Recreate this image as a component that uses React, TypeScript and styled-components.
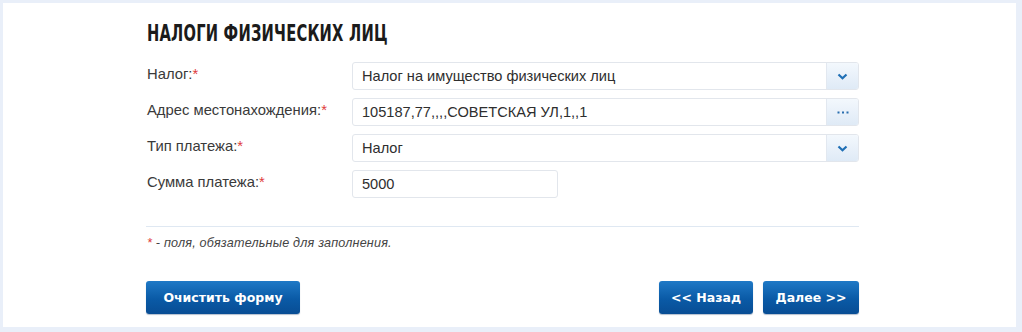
import React from "react";
import styled, { createGlobalStyle } from "styled-components";

const Global = createGlobalStyle`
  html, body { margin: 0; padding: 0; }
  body { background: #e9eff9; font-family: Arial, "Liberation Sans", sans-serif; }
`;

const Frame = styled.div`
  width: 1022px;
  height: 332px;
  box-sizing: border-box;
  padding: 3px 6px 5px 3px;
  background: #e9eff9;
`;

const Panel = styled.div`
  height: 100%;
  box-sizing: border-box;
  background: #fff;
  padding: 16px 0 0 143px;
`;

const Content = styled.div`
  width: 713px;
`;

const Title = styled.h1`
  margin: 0 0 15px 1px;
  font-family: "DejaVu Sans Condensed", "DejaVu Sans", sans-serif;
  font-weight: bold;
  font-size: 23px;
  line-height: 28px;
  color: #1b1b1b;
  letter-spacing: 0.3px;
  transform: scaleX(0.71);
  transform-origin: left center;
  white-space: nowrap;
`;

const Form = styled.div`
  display: flex;
  flex-direction: column;
  gap: 8px;
`;

const Row = styled.div`
  display: grid;
  grid-template-columns: 206px 1fr;
  align-items: center;
  height: 28px;
`;

const Label = styled.div`
  font-size: 14.8px;
  color: #3a3a3a;
  padding-left: 1px;
  margin-top: -4px;
`;

const Star = styled.span`
  color: #e03a3a;
`;

const Field = styled.div<{ $w?: number }>`
  display: flex;
  height: 28px;
  width: ${(p) => (p.$w ? `${p.$w}px` : "100%")};
  box-sizing: border-box;
  border: 1px solid #e2e6ec;
  border-radius: 3px;
  background: #fff;
  overflow: hidden;
`;

const Value = styled.div`
  flex: 1;
  display: flex;
  align-items: center;
  padding-left: 9px;
  font-size: 14.6px;
  color: #2e2e2e;
`;

const SideBtn = styled.div`
  width: 31px;
  display: flex;
  align-items: center;
  justify-content: center;
  border-left: 1px solid #e2e8f0;
  background: linear-gradient(#f3f8fd, #dfeaf6);
  color: #2a6fb0;
`;

const Divider = styled.div`
  height: 1px;
  background: #dfe8f2;
  margin: 28px 0 0 0;
`;

const Note = styled.div`
  margin-top: 9px;
  font-size: 12.6px;
  font-style: italic;
  color: #444;
  padding-left: 1px;
  letter-spacing: 0.2px;
`;

const Actions = styled.div`
  display: flex;
  align-items: center;
  margin-top: 31px;
`;

const Spacer = styled.div`
  flex: 1;
`;

const Button = styled.button<{ $w: number }>`
  width: ${(p) => p.$w}px;
  height: 33px;
  margin-left: ${(p) => (p.$w < 100 ? "10px" : "0")};
  border: none;
  border-radius: 3px;
  background: linear-gradient(#1f79c6, #0a5aa6 55%, #084d94);
  box-shadow: 0 1px 1px rgba(0, 40, 90, 0.3);
  color: #fff;
  font-family: "DejaVu Sans", Arial, sans-serif;
  font-weight: bold;
  font-size: 12.5px;
  padding: 0;
  cursor: pointer;
`;

const Chevron = () => (
  <svg width="11" height="7" viewBox="0 0 11 7">
    <path d="M1.5 1.5 L5.5 5.2 L9.5 1.5" fill="none" stroke="#1f6fb5" strokeWidth="2.2" />
  </svg>
);

const Dots = () => (
  <svg width="12" height="3" viewBox="0 0 12 3">
    <rect x="0.5" y="0.5" width="2" height="2" fill="#2a6fb0" />
    <rect x="5" y="0.5" width="2" height="2" fill="#2a6fb0" />
    <rect x="9.5" y="0.5" width="2" height="2" fill="#2a6fb0" />
  </svg>
);

const rows = [
  { label: "Налог:", value: "Налог на имущество физических лиц", side: "chev" },
  { label: "Адрес местонахождения:", value: "105187,77,,,,СОВЕТСКАЯ УЛ,1,,1", side: "dots" },
  { label: "Тип платежа:", value: "Налог", side: "chev" },
  { label: "Сумма платежа:", value: "5000", side: "", w: 206 },
];

export default function App() {
  return (
    <>
      <Global />
      <Frame>
        <Panel>
          <Content>
            <Title>НАЛОГИ ФИЗИЧЕСКИХ ЛИЦ</Title>
            <Form>
              {rows.map((r) => (
                <Row key={r.label}>
                  <Label>
                    {r.label}
                    <Star>*</Star>
                  </Label>
                  <Field $w={r.w}>
                    <Value>{r.value}</Value>
                    {r.side && <SideBtn>{r.side === "chev" ? <Chevron /> : <Dots />}</SideBtn>}
                  </Field>
                </Row>
              ))}
            </Form>
            <Divider />
            <Note>
              <Star>*</Star> - поля, обязательные для заполнения.
            </Note>
            <Actions>
              <Button $w={154}>Очистить форму</Button>
              <Spacer />
              <Button $w={94}>&lt;&lt; Назад</Button>
              <Button $w={96}>Далее &gt;&gt;</Button>
            </Actions>
          </Content>
        </Panel>
      </Frame>
    </>
  );
}
